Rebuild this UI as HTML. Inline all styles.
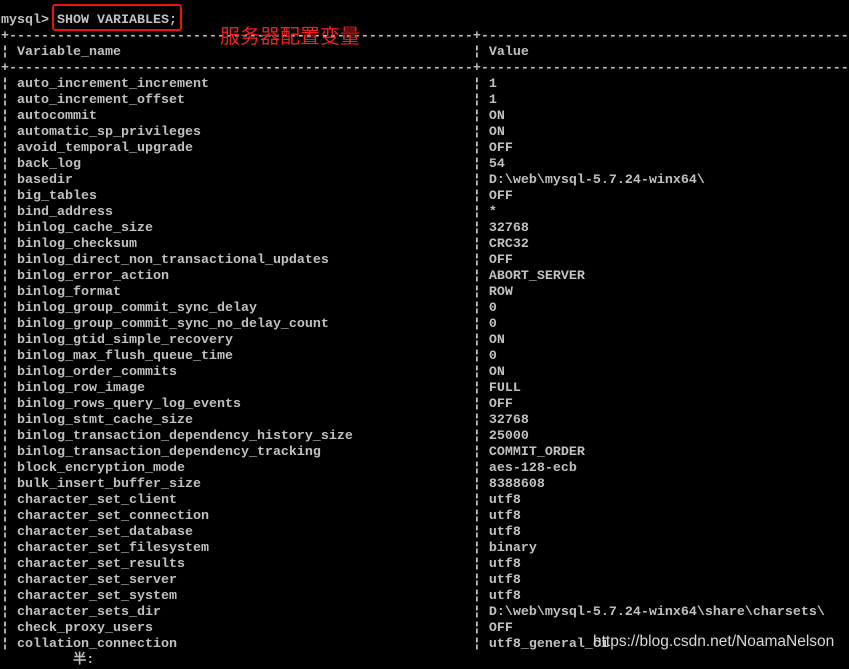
<!DOCTYPE html>
<html><head><meta charset="utf-8"><style>
body{margin:0;background:#000;width:849px;height:661px;overflow:hidden;position:relative}
pre{position:absolute;left:1px;top:13px;margin:0;font-family:"Liberation Mono",monospace;font-weight:bold;font-size:13.33px;line-height:16px;color:#c0c0c0;white-space:pre}
.box{position:absolute;left:52px;top:4px;width:126px;height:23px;border:2px solid #f01010;border-radius:3px}
.cn{position:absolute;left:220px;top:22px;font-family:"Noto Sans CJK SC",sans-serif;font-size:20px;line-height:26px;color:#f02020}
.wm{position:absolute;left:593px;top:633px;font-family:"Liberation Sans",sans-serif;font-size:15.5px;color:#d8d8d8}
</style></head><body>
<pre>mysql&gt; SHOW VARIABLES;
+----------------------------------------------------------+----------------------------------------------
¦ Variable_name                                            ¦ Value
+----------------------------------------------------------+----------------------------------------------
¦ auto_increment_increment                                 ¦ 1
¦ auto_increment_offset                                    ¦ 1
¦ autocommit                                               ¦ ON
¦ automatic_sp_privileges                                  ¦ ON
¦ avoid_temporal_upgrade                                   ¦ OFF
¦ back_log                                                 ¦ 54
¦ basedir                                                  ¦ D:\web\mysql-5.7.24-winx64\
¦ big_tables                                               ¦ OFF
¦ bind_address                                             ¦ *
¦ binlog_cache_size                                        ¦ 32768
¦ binlog_checksum                                          ¦ CRC32
¦ binlog_direct_non_transactional_updates                  ¦ OFF
¦ binlog_error_action                                      ¦ ABORT_SERVER
¦ binlog_format                                            ¦ ROW
¦ binlog_group_commit_sync_delay                           ¦ 0
¦ binlog_group_commit_sync_no_delay_count                  ¦ 0
¦ binlog_gtid_simple_recovery                              ¦ ON
¦ binlog_max_flush_queue_time                              ¦ 0
¦ binlog_order_commits                                     ¦ ON
¦ binlog_row_image                                         ¦ FULL
¦ binlog_rows_query_log_events                             ¦ OFF
¦ binlog_stmt_cache_size                                   ¦ 32768
¦ binlog_transaction_dependency_history_size               ¦ 25000
¦ binlog_transaction_dependency_tracking                   ¦ COMMIT_ORDER
¦ block_encryption_mode                                    ¦ aes-128-ecb
¦ bulk_insert_buffer_size                                  ¦ 8388608
¦ character_set_client                                     ¦ utf8
¦ character_set_connection                                 ¦ utf8
¦ character_set_database                                   ¦ utf8
¦ character_set_filesystem                                 ¦ binary
¦ character_set_results                                    ¦ utf8
¦ character_set_server                                     ¦ utf8
¦ character_set_system                                     ¦ utf8
¦ character_sets_dir                                       ¦ D:\web\mysql-5.7.24-winx64\share\charsets\
¦ check_proxy_users                                        ¦ OFF
¦ collation_connection                                     ¦ utf8_general_ci
         半:</pre>
<div class="box"></div>
<div class="cn">服务器配置变量</div>
<div class="wm">https://blog.csdn.net/NoamaNelson</div>
</body></html>
